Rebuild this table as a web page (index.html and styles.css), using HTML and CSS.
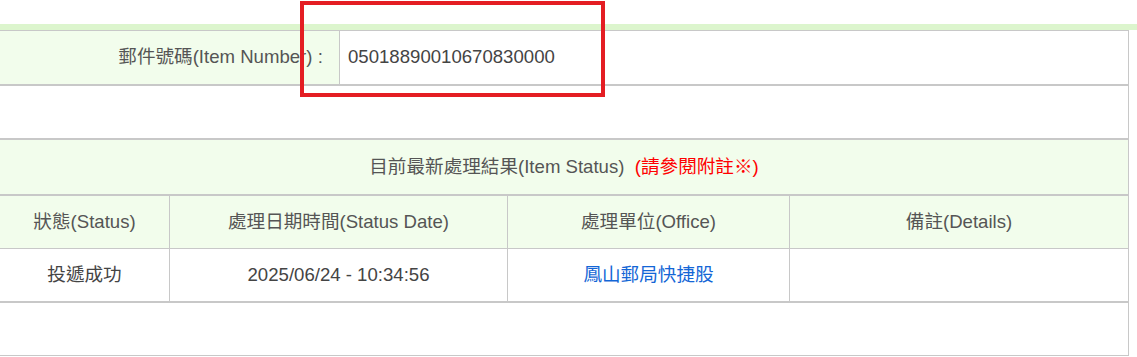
FILE: index.html
```html
<!DOCTYPE html>
<html lang="zh-Hant">
<head>
    <meta charset="UTF-8">
    <meta name="viewport" content="width=device-width, initial-scale=1.0">
    <title>郵件查詢</title>
    <link rel="stylesheet" href="styles.css">
</head>
<body>
    <div class="page">
        <div class="top-bar"></div>
        <div class="result">
            <table class="tbl">
                <tr>
                    <td class="label">郵件號碼(Item Number)&nbsp;:&nbsp;</td>
                    <td class="value">05018890010670830000</td>
                </tr>
            </table>

            <table class="tbl">
                <tr><td class="blank"></td></tr>
            </table>

            <table class="tbl">
                <tr>
                    <td class="title">目前最新處理結果(Item Status)&nbsp; <span class="note">(請參閱附註※)</span></td>
                </tr>
            </table>

            <table class="tbl grid">
                <colgroup>
                    <col style="width: 170px">
                    <col style="width: 338px">
                    <col style="width: 282px">
                    <col>
                </colgroup>
                <tr class="head">
                    <td>狀態(Status)</td>
                    <td>處理日期時間(Status Date)</td>
                    <td>處理單位(Office)</td>
                    <td>備註(Details)</td>
                </tr>
                <tr>
                    <td>投遞成功</td>
                    <td>2025/06/24 - 10:34:56</td>
                    <td><a class="office" href="#">鳳山郵局快捷股</a></td>
                    <td></td>
                </tr>
            </table>

            <table class="tbl">
                <tr><td class="blank"></td></tr>
            </table>
        </div>

        <!-- highlight box around the item number -->
        <div class="mark"></div>
    </div>
</body>
</html>
```

FILE: styles.css
```css
body {
    margin: 0;
    font-family: "Liberation Sans", "Noto Sans CJK TC", sans-serif;
    font-size: 18.6px;
    line-height: 22px;
    color: #555;
    background: #fff;
}
.page {
    position: relative;
    padding-top: 24px;
}
.top-bar {
    height: 6px;
    background-color: #dcf5cd;
}
.result {
    width: 1130px;
    margin-left: -1px;
}
.tbl {
    width: 100%;
    border-collapse: collapse;
    table-layout: fixed;
    border: 1px solid #c8c8c8;
}
.tbl td {
    padding: 0 0 1px;
    vertical-align: middle;
}
.label {
    width: 328px;
    height: 52px;
    padding-right: 11px !important;
    text-align: right;
    background-color: #f2fdec;
    border-right: 1px solid #c8c8c8;
}
.value {
    padding-left: 8px !important;
    color: #444;
}
.blank {
    height: 51px;
}
.title {
    height: 53px;
    text-align: center;
    background-color: #f2fdec;
}
.note {
    color: #ff0000;
}
.grid td {
    height: 51px;
    text-align: center;
    border: 1px solid #c8c8c8;
    color: #444;
}
.grid .head td {
    background-color: #f2fdec;
    color: #555;
}
.office {
    color: #1366d6;
    text-decoration: none;
}
.mark {
    position: absolute;
    left: 300px;
    top: 1px;
    width: 297px;
    height: 88px;
    border: 4px solid #e41d23;
}
```
